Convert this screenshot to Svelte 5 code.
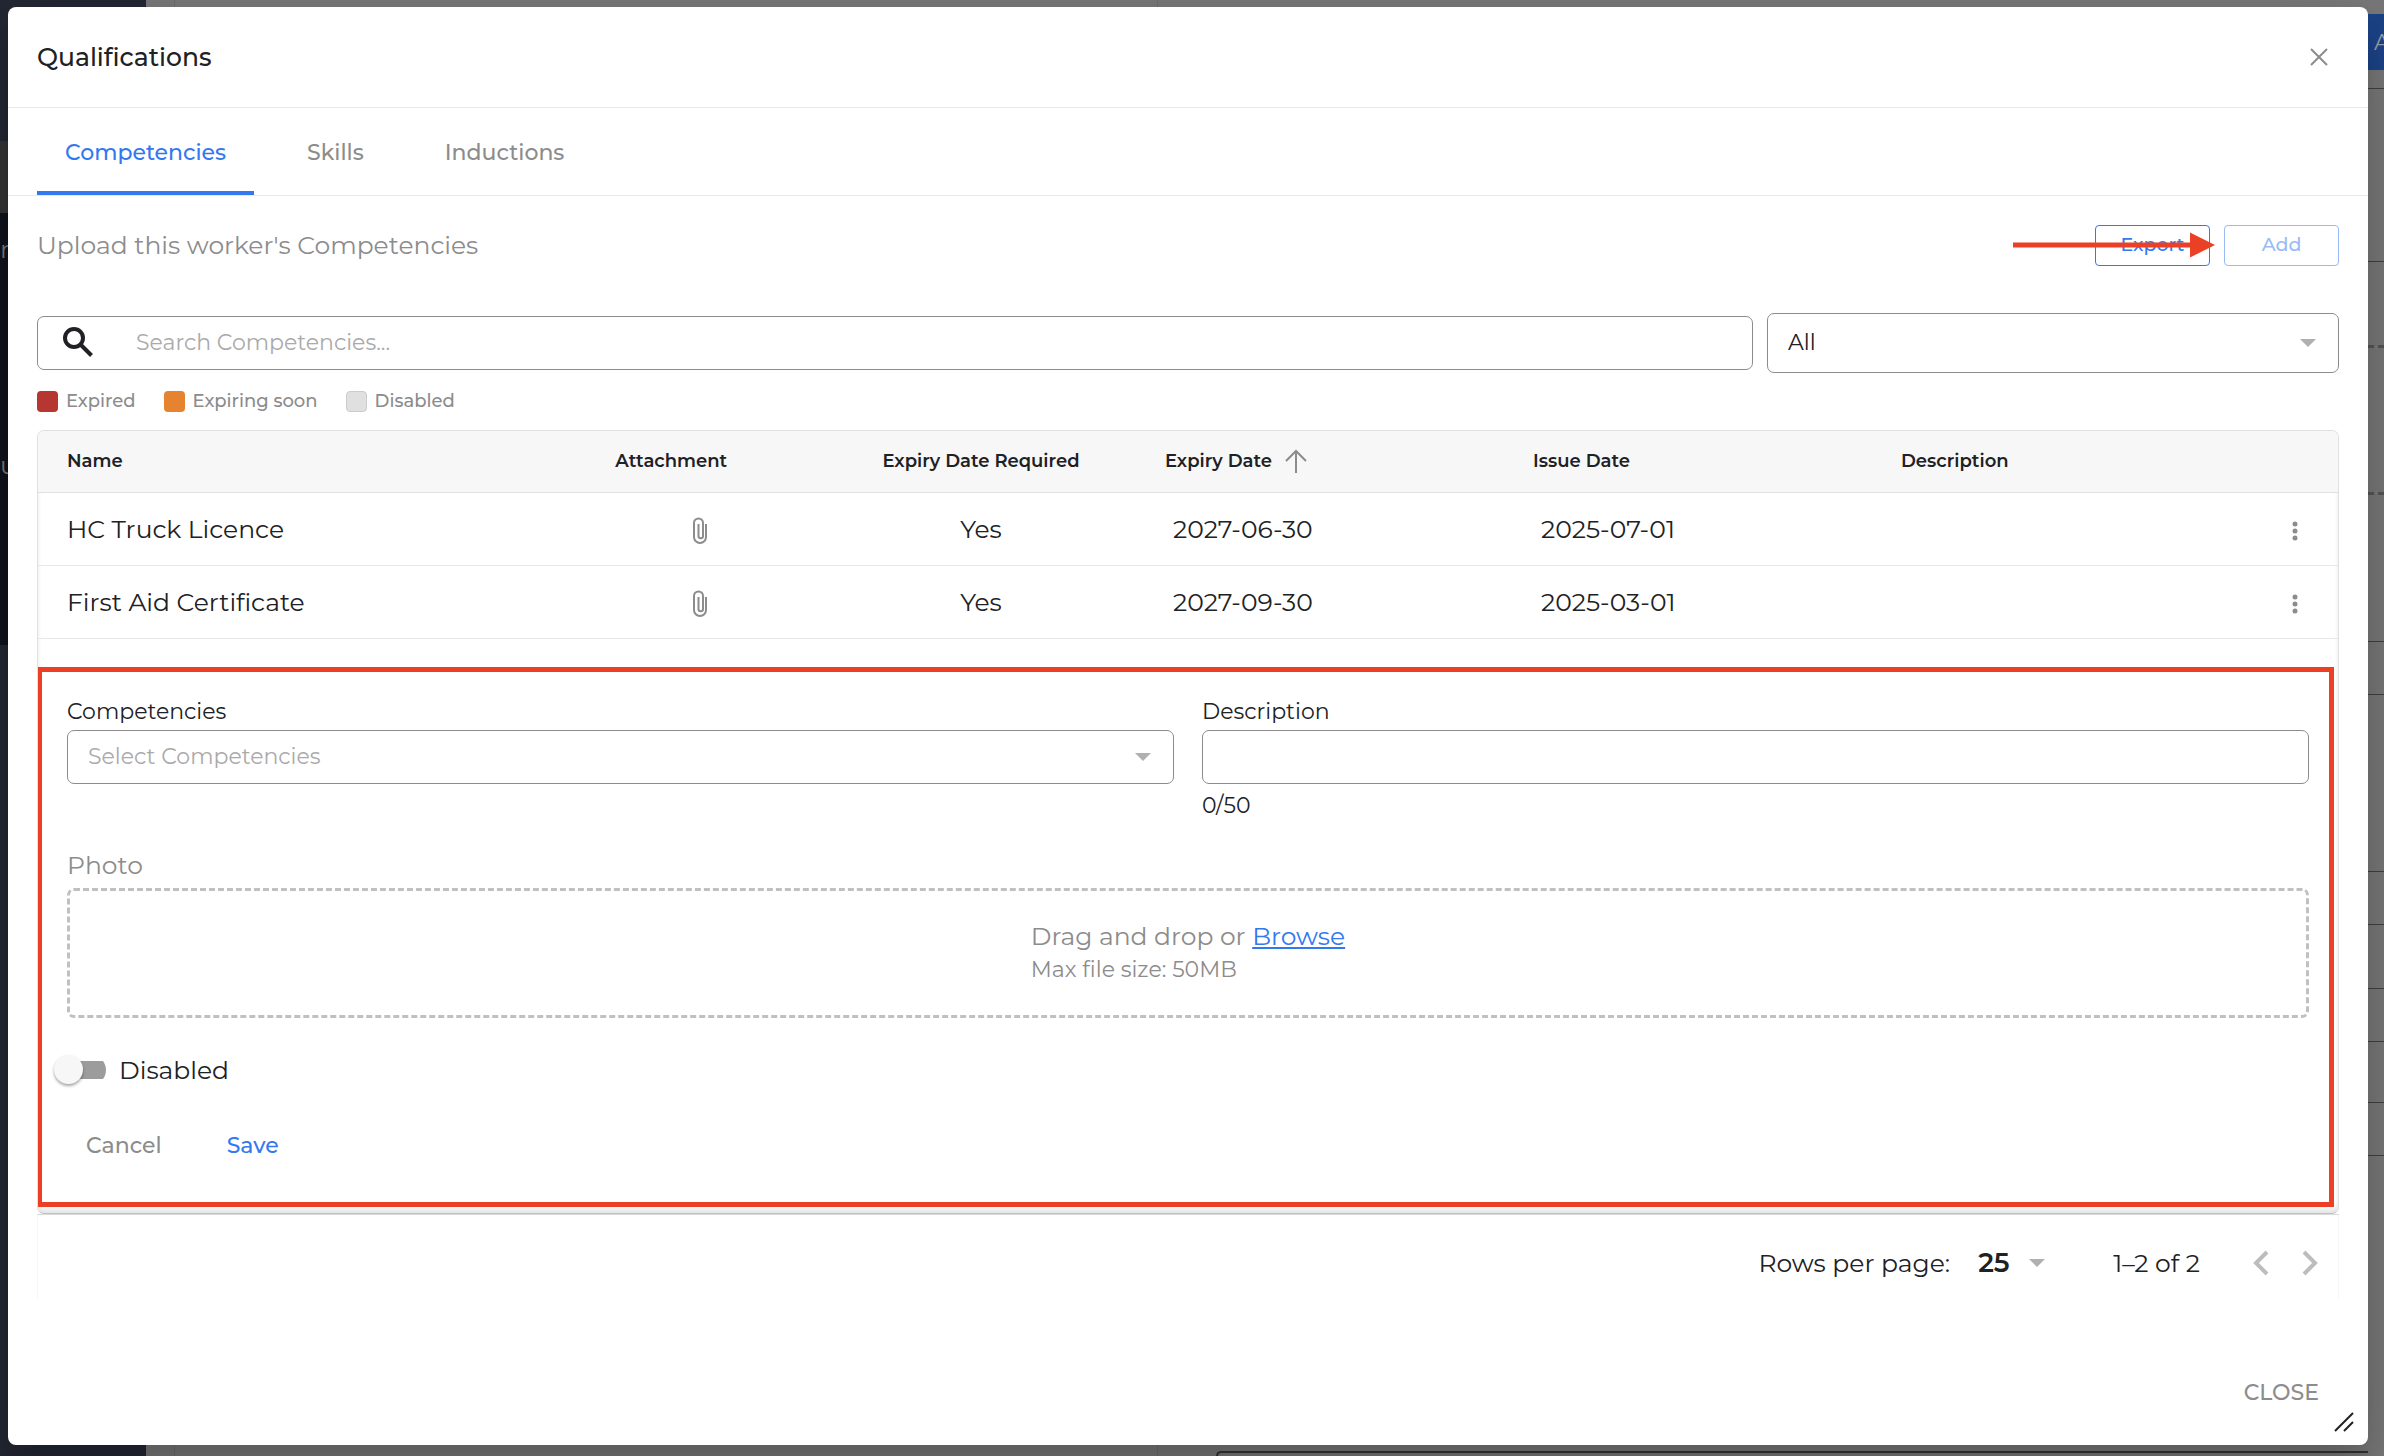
<script lang="ts">
	interface Competency {
		name: string;
		required: string;
		expiry: string;
		issued: string;
	}

	const tabs = ['Competencies', 'Skills', 'Inductions'];
	const legend = [
		{ label: 'Expired', tone: 'expired' },
		{ label: 'Expiring soon', tone: 'expiring' },
		{ label: 'Disabled', tone: 'disabled' }
	];
	const rows: Competency[] = [
		{ name: 'HC Truck Licence', required: 'Yes', expiry: '2027-06-30', issued: '2025-07-01' },
		{ name: 'First Aid Certificate', required: 'Yes', expiry: '2027-09-30', issued: '2025-03-01' }
	];

	let activeTab = $state('Competencies');
	let search = $state('');
	let description = $state('');
	let disabled = $state(false);
</script>

{#snippet caret()}
	<svg class="caret" viewBox="0 0 16 8" aria-hidden="true"><path d="M0 0h16L8 8z" /></svg>
{/snippet}

<div class="app">
	<div class="backdrop" aria-hidden="true">
		<div class="sidebar">
			<div class="side-top"></div>
			<div class="side-active"></div>
			<div class="side-menu">
				<span>r</span>
				<span>u</span>
			</div>
		</div>
		<div class="page">
			<div class="page-card"></div>
			<div class="page-panel"></div>
		</div>
		<div class="strip">
			<div class="strip-button">A</div>
			<div class="line h18"></div>
			<div class="line h172"></div>
			<div class="line dashed h84"></div>
			<div class="line dashed h144"></div>
			<div class="line h144"></div>
			<div class="line h52"></div>
			<div class="line h176"></div>
			<div class="line h52"></div>
			<div class="line h64"></div>
			<div class="line h52"></div>
			<div class="line h60"></div>
			<div class="line h52"></div>
		</div>
	</div>

	<div class="dialog" role="dialog" aria-labelledby="dialog-title">
		<header>
			<h1 id="dialog-title">Qualifications</h1>
			<button class="icon-button" aria-label="Close dialog">
				<svg width="18" height="18" viewBox="0 0 18 18"><path d="M1 1l16 16M17 1L1 17" /></svg>
			</button>
		</header>

		<nav class="tabs">
			{#each tabs as tab}
				<button class:active={activeTab === tab} onclick={() => (activeTab = tab)}>{tab}</button>
			{/each}
		</nav>

		<main>
			<div class="intro">
				<p>Upload this worker's Competencies</p>
				<div class="actions">
					<button class="outlined">Export</button>
					<button class="outlined faded">Add</button>
					<svg class="arrow" width="202" height="26" viewBox="0 0 202 26" aria-hidden="true">
						<path d="M0 10.500h178v5H0zM177 .5l25 12.500-25 12.500z" />
					</svg>
				</div>
			</div>

			<div class="filters">
				<label class="search">
					<svg width="32" height="32" viewBox="0 0 32 32" aria-hidden="true">
						<circle cx="11" cy="11" r="9" />
						<path d="M17.500 17.500L28.500 28.500" />
					</svg>
					<input type="text" placeholder="Search Competencies..." aria-label="Search Competencies" bind:value={search} />
				</label>
				<div class="select filter">
					<select aria-label="Filter">
						<option>All</option>
					</select>
					{@render caret()}
				</div>
			</div>

			<ul class="legend">
				{#each legend as item}
					<li><span class="swatch {item.tone}"></span>{item.label}</li>
				{/each}
			</ul>

			<div class="table-card">
				<table>
					<thead>
						<tr>
							<th class="name">Name</th>
							<th class="attachment">Attachment</th>
							<th class="required">Expiry Date Required</th>
							<th class="expiry">
								<span class="sorted">
									Expiry Date
									<svg width="24" height="24" viewBox="0 0 24 24" aria-hidden="true">
										<path d="M12 24V2M2 12L12 2l10 10" />
									</svg>
								</span>
							</th>
							<th class="issued">Issue Date</th>
							<th class="desc">Description</th>
							<th class="menu" aria-label="Actions"></th>
						</tr>
					</thead>
					<tbody>
						{#each rows as row}
							<tr>
								<td>{row.name}</td>
								<td class="center file">
									<button class="icon-button" aria-label="View attachment">
										<svg class="clip" width="16" height="28" viewBox="0 0 16 28">
											<path d="M14 7v13a6 6 0 0 1-12 0V6a4.500 4.500 0 0 1 9 0v13a2.200 2.200 0 0 1-4.500 0V7" />
										</svg>
									</button>
								</td>
								<td class="center">{row.required}</td>
								<td class="date">{row.expiry}</td>
								<td class="date">{row.issued}</td>
								<td></td>
								<td class="center">
									<button class="icon-button" aria-label="More actions">
										<svg class="dots" width="6" height="20" viewBox="0 0 6 20">
											<circle cx="3" cy="3" r="2.500" />
											<circle cx="3" cy="10" r="2.500" />
											<circle cx="3" cy="17" r="2.500" />
										</svg>
									</button>
								</td>
							</tr>
						{/each}
					</tbody>
				</table>

				<form class="editor" onsubmit={(e) => e.preventDefault()}>
					<div class="fields">
						<div class="field">
							<label for="competency">Competencies</label>
							<div class="select">
								<select id="competency" class="empty">
									<option>Select Competencies</option>
								</select>
								{@render caret()}
							</div>
						</div>
						<div class="field">
							<label for="description">Description</label>
							<input id="description" type="text" maxlength="50" bind:value={description} />
							<span class="count">{description.length}/50</span>
						</div>
					</div>

					<span class="photo-label">Photo</span>
					<div class="dropzone">
						<div>
							<p>Drag and drop or <a href="#browse">Browse</a></p>
							<p class="hint">Max file size: 50MB</p>
						</div>
					</div>

					<label class="toggle">
						<input type="checkbox" bind:checked={disabled} />
						Disabled
					</label>

					<div class="buttons">
						<button type="button">Cancel</button>
						<button class="save">Save</button>
					</div>
				</form>
			</div>

			<div class="pagination">
				<label for="page-size">Rows per page:</label>
				<div class="page-size">
					<select id="page-size">
						<option>25</option>
					</select>
					{@render caret()}
				</div>
				<span class="range">1–2 of 2</span>
				<button class="icon-button" aria-label="Previous page">
					<svg class="chevron" width="16" height="26" viewBox="0 0 16 26"><path d="M14 2L3 13l11 11" /></svg>
				</button>
				<button class="icon-button" aria-label="Next page">
					<svg class="chevron" width="16" height="26" viewBox="0 0 16 26"><path d="M2 2l11 11L2 24" /></svg>
				</button>
			</div>
		</main>

		<footer>
			<button class="close">CLOSE</button>
			<svg class="resize" width="20" height="20" viewBox="0 0 20 20" aria-hidden="true">
				<path d="M1 19L19 1M10 19l9-9" />
			</svg>
		</footer>
	</div>
</div>

<style>
	:global(body) {
		margin: 0;
	}

	.app {
		position: relative;
		box-sizing: border-box;
		min-height: 100vh;
		padding: 7px 16px 11px 8px;
		display: flex;
		overflow: hidden;
		font-family: Montserrat, Inter, sans-serif;
		font-size: 25px;
		line-height: 32px;
		color: #202124;
	}

	.app :global(*) {
		box-sizing: border-box;
	}

	button,
	input,
	select {
		font: inherit;
		color: inherit;
		margin: 0;
		padding: 0;
		border: 0;
		background: none;
	}

	p,
	h1,
	ul {
		margin: 0;
		padding: 0;
	}

	svg {
		display: block;
		fill: none;
		stroke: #8c8c8c;
	}

	/* dimmed page behind the dialog */
	.backdrop {
		position: absolute;
		inset: 0;
		display: flex;
		background: #777;
	}

	.sidebar {
		width: 146px;
		display: flex;
		flex-direction: column;
		background: #232733;
		color: #77797c;
	}

	.side-top {
		height: 141px;
	}

	.side-active {
		height: 72px;
		background: #343434;
	}

	.side-menu {
		height: 432px;
		padding-top: 20px;
		display: flex;
		flex-direction: column;
		gap: 184px;
		background: #10141d;
	}

	.page {
		flex: 1;
		display: flex;
		align-items: flex-end;
		gap: 28px;
		padding-left: 28px;
	}

	.page-card {
		width: 984px;
		height: 100%;
		border: 1px solid #6c6c6c;
		border-width: 0 1px;
	}

	.page-panel {
		flex: 1;
		height: 5px;
		margin-left: 30px;
		border-top: 2px solid #333;
		border-left: 2px solid #333;
		border-radius: 6px 0 0;
	}

	.strip {
		width: 16px;
		padding-top: 14px;
		background: #777;
		overflow: hidden;
	}

	.strip-button {
		height: 56px;
		padding-left: 6px;
		line-height: 58px;
		font-size: 22px;
		background: #1c4388;
		color: #9aa0aa;
	}

	.line {
		border-bottom: 1px solid #404040;
	}

	.line.dashed {
		border-bottom: 3px dashed #555;
	}

	.h18 { height: 19px; }
	.h172 { height: 173px; }
	.h84 { height: 86px; }
	.h144 { height: 147px; }
	.h52 { height: 53px; }
	.h176 { height: 177px; }
	.h64 { height: 64px; }
	.h60 { height: 61px; }

	.dialog {
		position: relative;
		flex: 1;
		display: flex;
		flex-direction: column;
		background: #fff;
		border-radius: 8px;
		box-shadow: 0 22px 30px rgba(0, 0, 0, 0.15), 0 18px 76px rgba(0, 0, 0, 0.12);
	}

	header {
		height: 101px;
		padding: 0 37px 0 29px;
		display: flex;
		align-items: center;
		justify-content: space-between;
		border-bottom: 1px solid #e8e8e8;
	}

	h1 {
		font-size: 25px;
		font-weight: 500;
	}

	.icon-button {
		display: inline-flex;
		align-items: center;
		justify-content: center;
		min-width: 24px;
		vertical-align: middle;
		cursor: pointer;
	}

	header svg {
		stroke-width: 2;
	}

	.tabs {
		height: 88px;
		padding-left: 29px;
		display: flex;
		gap: 25px;
		border-bottom: 1px solid #e8e8e8;
	}

	.tabs button {
		padding: 6px 28px 0;
		font-size: 22px;
		font-weight: 500;
		color: #8c8c8c;
		border-bottom: 4px solid transparent;
	}

	.tabs .active {
		color: #3478f0;
		border-bottom-color: #3478f0;
	}

	main {
		padding: 28px 29px 0;
	}

	.intro {
		display: flex;
		align-items: center;
		justify-content: space-between;
		height: 42px;
		color: #8c8c8c;
	}

	.actions {
		position: relative;
		display: flex;
		gap: 14px;
	}

	.outlined {
		width: 115px;
		height: 41px;
		border: 1px solid #3478f0;
		border-radius: 4px;
		font-size: 19px;
		font-weight: 500;
		color: #3478f0;
	}

	.faded {
		opacity: 0.5;
	}

	.arrow {
		position: absolute;
		right: 124px;
		top: 7px;
		fill: #ec4026;
		stroke: none;
	}

	.filters {
		display: flex;
		align-items: center;
		gap: 14px;
		margin-top: 47px;
	}

	.search {
		flex: 1;
		height: 54px;
		display: flex;
		align-items: center;
		gap: 41px;
		padding-left: 25px;
		border: 1px solid #8c8c8c;
		border-radius: 7px;
	}

	.search svg {
		stroke: #202124;
		stroke-width: 4;
	}

	.search input {
		flex: 1;
		font-size: 22px;
		outline: none;
	}

	input::placeholder {
		color: #aaa;
		opacity: 1;
	}

	.select {
		position: relative;
		height: 54px;
		border: 1px solid #8c8c8c;
		border-radius: 7px;
	}

	.select.filter {
		width: 572px;
		height: 60px;
	}

	select {
		appearance: none;
		width: 100%;
		height: 100%;
		padding-left: 20px;
		font-size: 22px;
	}

	select.empty {
		color: #aaa;
	}

	.caret {
		position: absolute;
		right: 22px;
		top: 50%;
		width: 16px;
		height: 8px;
		margin-top: -4px;
		fill: #b0b0b0;
		stroke: none;
		pointer-events: none;
	}

	.legend {
		display: flex;
		gap: 28px;
		margin-top: 12px;
		list-style: none;
		font-size: 18px;
		font-weight: 500;
		color: #8c8c8c;
	}

	.legend li {
		display: flex;
		align-items: center;
		gap: 8px;
	}

	.swatch {
		width: 21px;
		height: 21px;
		border-radius: 4px;
	}

	.swatch.expired { background: #b63632; }
	.swatch.expiring { background: #e58331; }
	.swatch.disabled { background: #e0e0e0; border: 1px solid #ccc; }

	.table-card {
		margin-top: 13px;
		border: 1px solid #e0e0e0;
		border-bottom-color: #c0c0c0;
		border-radius: 7px;
		overflow: hidden;
		box-shadow: inset 0 -4px 4px rgba(0, 0, 0, 0.1);
	}

	table {
		width: 100%;
		border-collapse: collapse;
		table-layout: fixed;
	}

	thead {
		background: #f7f7f7;
	}

	th {
		height: 61px;
		padding: 0;
		font-size: 18px;
		font-weight: 600;
		text-align: left;
		border-bottom: 1px solid #e0e0e0;
	}

	td {
		height: 73px;
		padding: 0;
		border-bottom: 1px solid #e8e8e8;
	}

	th:first-child,
	td:first-child {
		padding-left: 29px;
	}

	.name { width: 25.1%; }
	.attachment { width: 7.9%; }
	.required { width: 16%; text-align: center; }
	.expiry { width: 16%; }
	.issued { width: 16%; }
	.desc { width: 15.3%; }

	.center {
		text-align: center;
	}

	.file {
		padding-right: 12px;
	}

	.sorted {
		display: flex;
		align-items: center;
		gap: 12px;
	}

	.sorted svg {
		stroke-width: 2;
	}

	.date {
		padding-left: 8px;
	}

	.clip {
		stroke-width: 2;
	}

	.dots {
		fill: #8c8c8c;
		stroke: none;
	}

	.editor {
		margin: 28px 4px 6px -1px;
		padding: 24px 20px 40px 25px;
		border: 5px solid #ec4026;
		background: #fff;
	}

	.fields {
		display: grid;
		grid-template-columns: 1fr 1fr;
		gap: 28px;
	}

	.field {
		display: flex;
		flex-direction: column;
		font-size: 22px;
	}

	.field > input {
		height: 54px;
		padding: 0 20px;
		border: 1px solid #8c8c8c;
		border-radius: 7px;
	}

	.field label {
		margin-bottom: 2px;
	}

	.count {
		margin-top: 6px;
	}

	.photo-label {
		display: block;
		margin-top: 27px;
		color: #8c8c8c;
	}

	.dropzone {
		height: 130px;
		margin-top: 7px;
		display: flex;
		align-items: center;
		justify-content: center;
		border: 3px dashed #c0c0c0;
		border-radius: 7px;
		color: #8c8c8c;
		line-height: 34px;
	}

	.hint {
		font-size: 22px;
	}

	a {
		color: #3478f0;
	}

	.toggle {
		display: flex;
		align-items: center;
		gap: 13px;
		margin: 36px 0 0 -13px;
	}

	.toggle input {
		appearance: none;
		display: flex;
		align-items: center;
		width: 52px;
		height: 30px;
		background: linear-gradient(#9c9c9c, #9c9c9c) 14px 6px / 38px 18px no-repeat;
		border-radius: 15px;
	}

	.toggle input::before {
		content: '';
		width: 29px;
		height: 29px;
		border-radius: 50%;
		background: #f7f7f7;
		box-shadow: 0 2px 3px rgba(0, 0, 0, 0.35);
	}

	.toggle input:checked::before {
		margin-left: 23px;
	}

	.buttons {
		display: flex;
		gap: 65px;
		margin: 44px 0 0 19px;
		font-size: 22px;
		font-weight: 500;
		color: #8c8c8c;
	}

	.buttons .save {
		color: #3478f0;
	}

	.pagination {
		height: 84px;
		margin-top: 1px;
		padding: 13px 16px 0 0;
		display: flex;
		align-items: center;
		justify-content: flex-end;
		border: solid #f7f7f7;
		border-width: 0 1px;
		box-shadow: 0 -1px 0 #dadada;
	}

	.page-size {
		position: relative;
		width: 117px;
		margin-right: 46px;
	}

	.page-size select {
		padding-left: 28px;
		font-size: 27px;
		font-weight: 600;
	}

	.range {
		margin-right: 49px;
	}

	.chevron {
		stroke: #bdbdbd;
		stroke-width: 4;
	}

	.pagination .icon-button + .icon-button {
		margin-left: 25px;
	}

	footer {
		margin-top: auto;
		padding: 0 14px 13px;
		display: flex;
		flex-direction: column;
		align-items: flex-end;
		gap: 3px;
	}

	.close {
		margin-right: 35px;
		font-size: 22px;
		font-weight: 500;
		color: #8c8c8c;
	}

	.resize {
		stroke: #202124;
		stroke-width: 2;
	}
</style>
